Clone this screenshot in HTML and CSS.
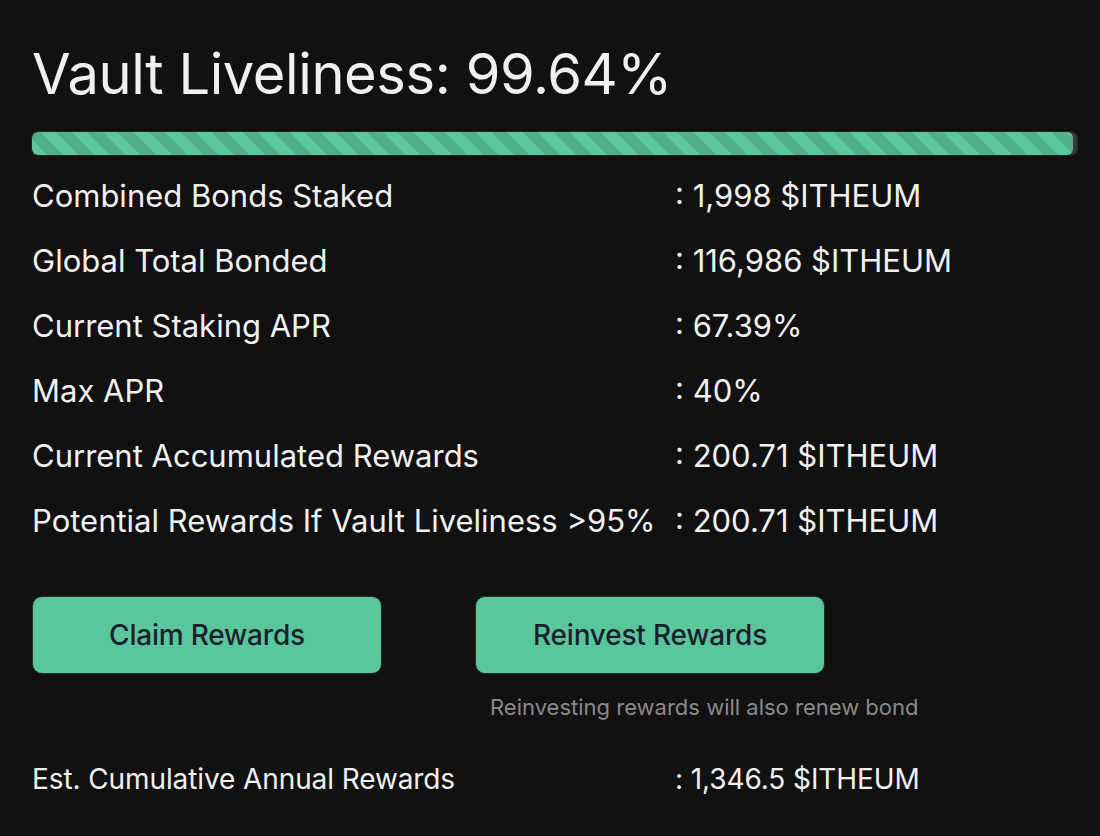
FILE: index.html
```html
<!DOCTYPE html>
<html>
<head>
<meta charset="utf-8">
<link rel="stylesheet" href="styles.css">
</head>
<body>
<div class="panel">
  <h1 class="title">Vault Liveliness: 99.64%</h1>
  <div class="track"><div class="fill" style="width:99.64%"></div></div>
  <div class="stats">
    <div class="label">Combined Bonds Staked</div><div class="value">: 1,998 $ITHEUM</div>
    <div class="label">Global Total Bonded</div><div class="value">: 116,986 $ITHEUM</div>
    <div class="label">Current Staking APR</div><div class="value">: 67.39%</div>
    <div class="label">Max APR</div><div class="value">: 40%</div>
    <div class="label">Current Accumulated Rewards</div><div class="value">: 200.71 $ITHEUM</div>
    <div class="label">Potential Rewards If Vault Liveliness &gt;95%</div><div class="value">: 200.71 $ITHEUM</div>
  </div>
  <div class="actions">
    <button class="btn">Claim Rewards</button>
    <div class="reinvest">
      <button class="btn">Reinvest Rewards</button>
      <p class="note">Reinvesting rewards will also renew bond</p>
    </div>
  </div>
  <div class="est">
    <div class="label">Est. Cumulative Annual Rewards</div><div class="value">: 1,346.5 $ITHEUM</div>
  </div>
</div>
</body>
</html>
```
FILE: styles.css
```css
html, body {
  margin: 0;
  padding: 0;
  background: #111111;
}
body {
  font-family: Inter, "Liberation Sans", sans-serif;
  color: #f0f0f0;
}
.panel {
  padding: 38px 23px 0 32px;
}
.title {
  margin: 0;
  font-size: 56px;
  font-weight: 400;
  line-height: 72px;
  letter-spacing: -0.4px;
}
.track {
  margin-top: 22px;
  height: 23px;
  border-radius: 6px;
  background: #3a3a3a;
  box-shadow: 0 0 0 1px #222;
  overflow: hidden;
}
.fill {
  height: 100%;
  border-radius: 6px;
  background: repeating-linear-gradient(45deg, #5cc69d 0px, #5cc69d 11px, #51b08b 11px, #51b08b 22px);
}
.stats {
  display: grid;
  grid-template-columns: 643px auto;
  grid-auto-rows: 65px;
  align-items: center;
  margin-top: 8px;
  font-size: 31px;
  letter-spacing: 0;
}
.actions {
  display: flex;
  gap: 93px;
  margin-top: 43px;
}
.btn {
  width: 350px;
  height: 78px;
  border: 1px solid #2a2a2a;
  border-radius: 10px;
  background: #5ac69c;
  color: #1c1f2e;
  font-family: inherit;
  font-size: 28px;
  font-weight: 500;
  letter-spacing: -0.2px;
}
.reinvest {
  display: flex;
  flex-direction: column;
}
.note {
  margin: 20px 0 0 15px;
  color: #8a8a8a;
  font-size: 22px;
}
.est {
  display: grid;
  grid-template-columns: 643px auto;
  margin-top: 42px;
  font-size: 28px;
  letter-spacing: -0.1px;
}
```
